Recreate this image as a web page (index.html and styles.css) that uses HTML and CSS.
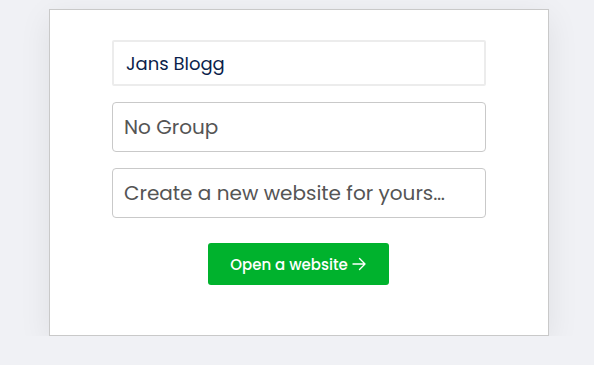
FILE: index.html
```html
<!DOCTYPE html>
<html lang="en">
<head>
  <meta charset="UTF-8">
  <meta name="viewport" content="width=device-width, initial-scale=1.0">
  <title>New Website</title>
  <link rel="stylesheet" href="styles.css">
</head>
<body>
  <div class="card">
    <form class="site-form">
      <input type="text" class="field field-name" name="name" value="Jans Blogg">
      <div class="field">No Group</div>
      <div class="field">Create a new website for yours…</div>
      <button type="submit" class="open-btn">Open a website
        <svg class="arrow" width="14" height="14" viewBox="0 0 14 14" fill="none" stroke="currentColor" stroke-width="1.4" stroke-linecap="round" stroke-linejoin="round">
          <path d="M1 7h12M7.5 1.5L13 7l-5.5 5.5"/>
        </svg>
      </button>
    </form>
  </div>
</body>
</html>
```

FILE: styles.css
```css
body {
  font-family: Poppins, "Open Sans", sans-serif;
  margin: 0;
  padding: 9px 0 0;
  background-color: #f0f1f5;
}

.card {
  width: 498px;
  margin-left: 49px;
  padding: 30px 0 50px;
  background-color: #ffffff;
  border: 1px solid #c9c9c9;
  box-shadow: 0 8px 30px rgba(0, 0, 20, 0.08);
}

.site-form {
  width: 374px;
  margin-left: 62px;
  display: flex;
  flex-direction: column;
  gap: 16px;
}

.field {
  box-sizing: border-box;
  width: 100%;
  height: 50px;
  padding: 0 11px;
  display: flex;
  align-items: center;
  border: 1px solid #c9c9c9;
  border-radius: 4px;
  font-family: inherit;
  font-size: 20px;
  color: #555555;
  background: #ffffff;
}

.field-name {
  height: 46px;
  padding: 0 12px;
  border: 2px solid #ececec;
  border-radius: 2px;
  font-size: 18px;
  color: #0b1f4b;
  outline: none;
}

.open-btn {
  align-self: center;
  margin-top: 9px;
  margin-right: 2px;
  width: 181px;
  height: 42px;
  display: flex;
  align-items: center;
  justify-content: center;
  gap: 4px;
  border: none;
  border-radius: 3px;
  background-color: #00b22d;
  color: #ffffff;
  font-family: inherit;
  font-size: 15px;
  font-weight: 500;
  cursor: pointer;
}

.arrow {
  flex-shrink: 0;
}
```
